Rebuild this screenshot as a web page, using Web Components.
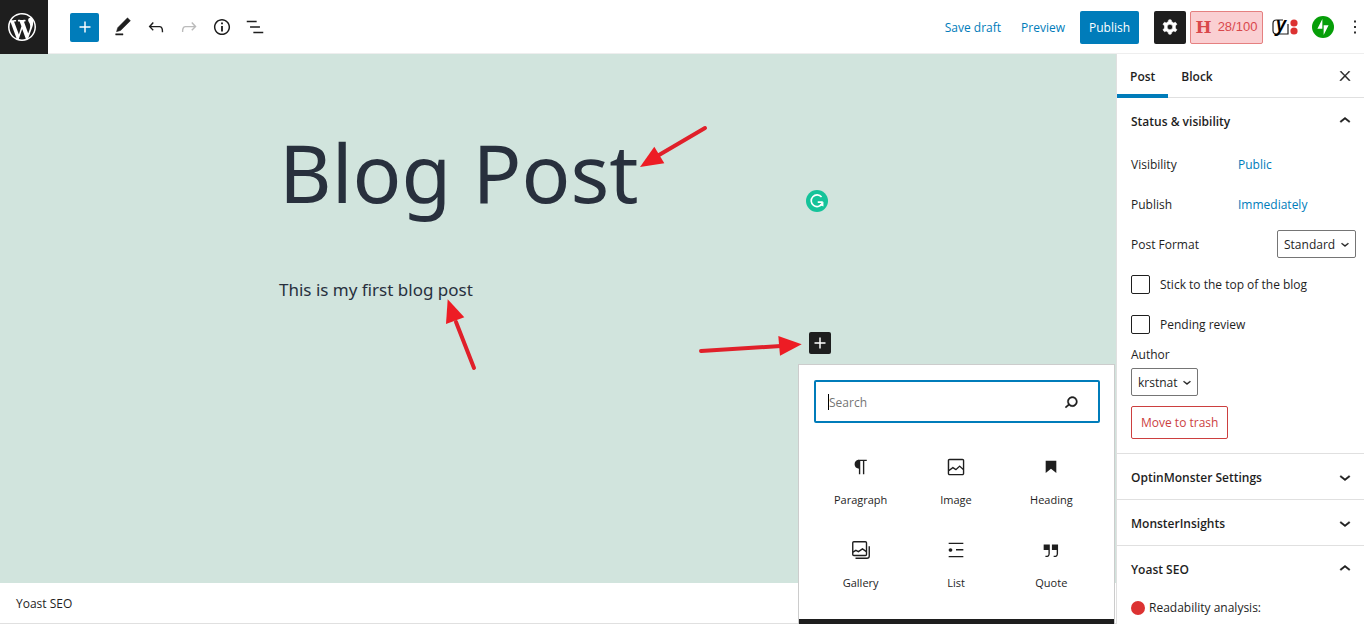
<!DOCTYPE html>
<html lang="en">
<head>
<meta charset="utf-8">
<meta name="viewport" content="width=device-width, initial-scale=1">
<title>Edit Post</title>
<style>
body {
  margin: 0;
  font-family: "Open Sans", "Noto Sans", sans-serif;
  font-size: 12px;
  line-height: 18px;
  color: #1e1e1e;
  --blue: #007cba;
  --dark: #1e1e1e;
  --line: #e0e0e0;
  --red: #cc3f3f;
}
</style>
</head>
<body>
<post-editor></post-editor>

<script>
/**
 * Icon shapes, all on a 24x24 grid unless a viewBox is given.
 */
const icons = {
  plus: '<path d="M18 11.2h-5.2V6h-1.6v5.2H6v1.6h5.2V18h1.6v-5.2H18z"/>',
  edit: '<path stroke="currentColor" stroke-width=".5" d="M20.1 5.1L16.9 2 6.2 12.7l-1.3 4.4 4.5-1.3L20.1 5.1zM4 20.8h8v-1.5H4v1.5z"/>',
  undo: '<path d="M18.3 11.7c-.6-.6-1.4-.9-2.3-.9H6.7l2.9-3.3-1.1-1-4.5 5L8.5 16l1-1-2.7-2.7H16c.5 0 .9.2 1.3.5 1 1 1 3.4 1 4.5v.3h1.5v-.2c0-1.5 0-4.3-1.5-5.7z"/>',
  redo: '<path d="M15.6 6.5l-1.1 1 2.9 3.3H8c-.9 0-1.7.3-2.3.9-1.4 1.5-1.4 4.2-1.4 5.6v.2h1.5v-.3c0-1.1 0-3.5 1-4.5.3-.3.7-.5 1.3-.5h9.2L14.5 15l1.1 1.1 4.6-4.6-4.6-5z"/>',
  info: '<path d="M12 3.2c-4.8 0-8.8 3.9-8.8 8.8 0 4.8 3.9 8.8 8.8 8.8 4.8 0 8.8-3.9 8.8-8.8 0-4.8-4-8.8-8.8-8.8zm0 16c-4 0-7.2-3.3-7.2-7.2C4.8 8 8 4.8 12 4.8s7.2 3.3 7.2 7.2c0 4-3.2 7.2-7.2 7.2zM11 17h2v-6h-2v6zm0-8h2V7h-2v2z"/>',
  outline: '<path d="M13.8 5.2H3v1.5h10.8V5.2zm-3.6 12v1.5H21v-1.5H10.2zm7.2-6H6.6v1.5h10.8v-1.5z"/>',
  cog: '<path fill-rule="evenodd" stroke="currentColor" stroke-width=".6" d="M10.289 4.836A1 1 0 0111.275 4h1.306a1 1 0 01.987.836l.244 1.466c.787.26 1.503.679 2.108 1.218l1.393-.522a1 1 0 011.216.437l.653 1.13a1 1 0 01-.23 1.273l-1.148.944a6.025 6.025 0 010 2.435l1.149.946a1 1 0 01.23 1.272l-.653 1.13a1 1 0 01-1.216.437l-1.394-.522c-.605.54-1.32.958-2.108 1.218l-.244 1.466a1 1 0 01-.987.836h-1.306a1 1 0 01-.986-.836l-.244-1.466a5.995 5.995 0 01-2.108-1.218l-1.394.522a1 1 0 01-1.217-.436l-.653-1.131a1 1 0 01.23-1.272l1.149-.946a6.026 6.026 0 010-2.435l-1.148-.944a1 1 0 01-.23-1.272l.653-1.131a1 1 0 011.217-.437l1.393.522a5.994 5.994 0 012.108-1.218l.244-1.466zM14.929 12a3 3 0 11-6 0 3 3 0 016 0z"/>',
  more: '<path d="M13 19h-2v-2h2v2zm0-6h-2v-2h2v2zm0-6h-2V5h2v2z"/>',
  close: '<path stroke="currentColor" stroke-width=".8" d="M13 11.8l6.1-6.3-1-1-6.1 6.2-6.1-6.2-1 1 6.1 6.3-6.5 6.7 1 1 6.5-6.6 6.5 6.6 1-1z"/>',
  up: '<path stroke="currentColor" stroke-width=".5" d="M6.5 12.4L12 8l5.5 4.4-.9 1.2L12 10l-4.5 3.6-1-1.2z"/>',
  down: '<path stroke="currentColor" stroke-width=".5" d="M17.5 11.6L12 16l-5.5-4.4.9-1.2L12 14l4.5-3.6 1 1.2z"/>',
  search: '<path stroke="currentColor" stroke-width=".4" d="M13.5 6C10.5 6 8 8.5 8 11.5c0 1.1.3 2.1.9 3l-3.4 3 1 1.1 3.4-2.9c1 .9 2.2 1.4 3.6 1.4 3 0 5.5-2.5 5.5-5.5C19 8.5 16.5 6 13.5 6zm0 9.5c-2.2 0-4-1.8-4-4s1.8-4 4-4 4 1.8 4 4-1.8 4-4 4z"/>',
  paragraph: '<path d="M18.3 4H9.9v-.1l-.9.2c-2.3.4-4 2.4-4 4.8s1.7 4.4 4 4.8l.7.1V20h1.5V5.5h2.9V20h1.5V5.5h2.7V4z"/>',
  image: '<path d="M19 3H5c-1.1 0-2 .9-2 2v14c0 1.1.9 2 2 2h14c1.1 0 2-.9 2-2V5c0-1.1-.9-2-2-2zM5 4.5h14c.3 0 .5.2.5.5v8.4l-3-2.9c-.3-.3-.8-.3-1 0L11.9 14 9 12c-.3-.2-.6-.2-.8 0l-3.6 2.6V5c-.1-.3.1-.5.4-.5zm14 15H5c-.3 0-.5-.2-.5-.5v-2.4l4.1-3 3 1.9c.3.2.7.2.9-.1L16 12l3.5 3.4V19c0 .3-.2.5-.5.5z"/>',
  heading: '<path d="M6.2 5.2v13.4l5.8-4.8 5.8 4.8V5.2z"/>',
  gallery: '<g fill="none" stroke="currentColor" stroke-width="1.5"><rect x="3" y="3" width="15" height="15" rx="1.2"/><path d="M3.2 14.4l3.2-2 2.8 1.4 4.4-3 4.3 3M21 8v10.5c0 1.4-1 2.5-2.5 2.5H6"/></g>',
  list: '<path d="M4 4v1.5h16V4H4zm8 8.5h8V11h-8v1.5zM4 20h16v-1.5H4V20zm4-8c0-1.1-.9-2-2-2s-2 .9-2 2 .9 2 2 2 2-.9 2-2z"/>',
  quote: '<path d="M13 6v6h5.2v4c0 .8-.2 1.4-.5 1.7-.6.6-1.6.6-2.5.5h-.3v1.5h.5c1 0 2.3-.1 3.3-1 .6-.6 1-1.6 1-2.8V6H13zm-9 6h5.2v4c0 .8-.2 1.4-.5 1.7-.6.6-1.6.6-2.5.5h-.3v1.5h.5c1 0 2.3-.1 3.3-1 .6-.6 1-1.6 1-2.8V6H4v6z"/>',
  wordpress: {
    viewBox: '0 0 20 20',
    body: '<path d="M20 10c0-5.51-4.49-10-10-10C4.48 0 0 4.49 0 10c0 5.52 4.48 10 10 10 5.51 0 10-4.48 10-10zM7.78 15.37L4.37 6.22c.55-.02 1.17-.08 1.17-.08.5-.06.44-1.13-.06-1.11 0 0-1.45.11-2.37.11-.18 0-.37 0-.58-.01C4.12 2.69 6.87 1.11 10 1.11c2.33 0 4.45.87 6.05 2.34-.68-.11-1.65.39-1.65 1.58 0 .74.45 1.36.9 2.1.35.61.55 1.36.55 2.46 0 1.49-1.4 5-1.4 5l-3.03-8.37c.54-.02.82-.17.82-.17.5-.05.44-1.25-.06-1.22 0 0-1.44.12-2.38.12-.87 0-2.33-.12-2.33-.12-.5-.03-.56 1.2-.06 1.22l.92.08 1.26 3.41zM17.41 10c.24-.64.74-1.87.43-4.25.7 1.29 1.05 2.71 1.05 4.25 0 3.29-1.73 6.24-4.4 7.78.97-2.59 1.94-5.2 2.92-7.78zM6.1 18.09C3.12 16.65 1.11 13.53 1.11 10c0-1.3.23-2.48.72-3.59C3.25 10.3 4.67 14.2 6.1 18.09zm4.03-6.63l2.58 6.98c-.86.29-1.76.45-2.71.45-.79 0-1.57-.11-2.29-.33.81-2.38 1.62-4.74 2.42-7.1z"/>'
  },
  jetpack: '<circle cx="12" cy="12" r="12" fill="#069e08"/><path fill="#fff" d="M11.3 3.2v10.6H5.9zM12.7 20.8V10.2h5.4z"/>',
  yoast: {
    viewBox: '0 0 26 20',
    body: '<path d="M11 3H4.5Q1 3 1 6.5v7Q1 17 4.5 17H16V7" fill="none" stroke="#1e1e1e" stroke-width="1.2"/><text x="4" y="14" font-family="Noto Sans, sans-serif" font-size="20" font-weight="600" font-style="italic" fill="#000">y</text><circle cx="22" cy="6" r="3.6" fill="#dc3232"/><circle cx="22" cy="14" r="3.6" fill="#dc3232"/>'
  },
  grammarly: '<circle cx="12" cy="12" r="12" fill="#15c39a"/><path d="M17 7.6A6.4 6.4 0 1 0 17.6 15M18.3 13.2H12.8" fill="none" stroke="#fff" stroke-width="1.8"/><path d="M19 12.7v5.3l-4.2-2z" fill="#fff"/>'
}

/**
 * Creates a template from markup.
 *
 * @param {string} html - The markup.
 * @returns {HTMLTemplateElement} The template.
 */
const createTemplate = (html) => {
  const template = document.createElement('template')
  template.innerHTML = html
  return template
}

customElements.define('wp-icon',
  /**
   * Draws one icon, sized by the --size property.
   */
  class extends HTMLElement {
    constructor() {
      super()
      this.attachShadow({ mode: 'open' })
    }

    connectedCallback() {
      const icon = icons[this.getAttribute('name')]
      const viewBox = icon.viewBox || '0 0 24 24'
      this.shadowRoot.innerHTML = `
        <style>
          :host { display: inline-flex; flex: none; }
          svg { display: block; height: var(--size, 22px); fill: currentColor; overflow: visible; }
        </style>
        <svg viewBox="${viewBox}" aria-hidden="true">${icon.body || icon}</svg>
      `
    }
  }
)

const headerTemplate = createTemplate(`
  <style>
:host {
  display: flex;
  align-items: center;
  justify-content: space-between;
  height: 54px;
  background: #fff;
  box-shadow: inset 0 -1px #eee;
}

button, a {
  font: inherit;
  color: inherit;
  display: inline-flex;
  align-items: center;
  justify-content: center;
  padding: 0;
  border: none;
  border-radius: 2px;
  background: none;
  text-decoration: none;
  cursor: pointer;
}

.left, .right, .pinned {
  display: flex;
  align-items: center;
}

.logo {
  --size: 28px;
  width: 48px;
  height: 54px;
  padding-right: 5px;
  box-sizing: border-box;
  margin-right: 22px;
  border-radius: 0;
  background: var(--dark);
  color: #fff;
}

.add {
  width: 29px;
  height: 29px;
  margin-right: 7px;
  background: var(--blue);
  color: #fff;
}

.tool {
  width: 33px;
  height: 33px;
}

.tool:disabled {
  color: #bbb;
}

.right {
  gap: 15px;
}

.links {
  display: flex;
  gap: 20px;
  padding-top: 2px;
  color: var(--blue);
}

.publish {
  width: 59px;
  height: 33px;
  padding-top: 2px;
  background: var(--blue);
  color: #fff;
}

.pinned {
  gap: 4px;
}

.settings {
  width: 32px;
  height: 33px;
  background: var(--dark);
  color: #fff;
}

.score {
  width: 73px;
  height: 33px;
  box-sizing: border-box;
  gap: 6px;
  border: 1px solid #e58080;
  background: #facfd2;
  color: #d9484c;
  font-family: "Liberation Sans", sans-serif;
  font-size: 13px;
}

.score b {
  font-family: "DejaVu Serif", serif;
  font-size: 17px;
}

.yoast {
  --size: 20px;
  margin-left: 5px;
}

.jetpack {
  margin-left: 10px;
}

.more {
  width: 18px;
  margin-left: 8px;
}
  </style>
  <div class="left">
    <a class="logo" href="#" aria-label="View posts"><wp-icon name="wordpress"></wp-icon></a>
    <button class="add" aria-label="Add block"><wp-icon name="plus"></wp-icon></button>
    <button class="tool" aria-label="Tools"><wp-icon name="edit"></wp-icon></button>
    <button class="tool" aria-label="Undo"><wp-icon name="undo"></wp-icon></button>
    <button class="tool" aria-label="Redo" disabled><wp-icon name="redo"></wp-icon></button>
    <button class="tool" aria-label="Details"><wp-icon name="info"></wp-icon></button>
    <button class="tool" aria-label="Outline"><wp-icon name="outline"></wp-icon></button>
  </div>
  <div class="right">
    <div class="links">
      <button>Save draft</button>
      <button>Preview</button>
    </div>
    <button class="publish">Publish</button>
    <div class="pinned">
      <button class="settings" aria-label="Settings"><wp-icon name="cog"></wp-icon></button>
      <button class="score"><b>H</b>28/100</button>
      <button class="yoast" aria-label="Yoast SEO"><wp-icon name="yoast"></wp-icon></button>
      <button class="jetpack" aria-label="Jetpack"><wp-icon name="jetpack"></wp-icon></button>
      <button class="more" aria-label="Options"><wp-icon name="more"></wp-icon></button>
    </div>
  </div>
`)

customElements.define('editor-header',
  /**
   * Top toolbar of the editor.
   */
  class extends HTMLElement {
    constructor() {
      super()
      this.attachShadow({ mode: 'open' })
      this.shadowRoot.appendChild(headerTemplate.content.cloneNode(true))
    }
  }
)

const tileTemplate = createTemplate(`
  <style>
:host {
  display: block;
}

button {
  display: flex;
  flex-direction: column;
  align-items: center;
  justify-content: center;
  gap: 13px;
  width: 100%;
  height: 83px;
  padding: 0;
  border: none;
  background: none;
  color: var(--dark);
  font: inherit;
  font-size: 11px;
  cursor: pointer;
}
  </style>
  <button><wp-icon></wp-icon><span><slot></slot></span></button>
`)

customElements.define('block-tile',
  /**
   * One block type in the inserter.
   */
  class extends HTMLElement {
    constructor() {
      super()
      this.attachShadow({ mode: 'open' })
      const content = tileTemplate.content.cloneNode(true)
      content.querySelector('wp-icon').setAttribute('name', this.getAttribute('icon'))
      this.shadowRoot.appendChild(content)
    }
  }
)

const inserterTemplate = createTemplate(`
  <style>
:host {
  display: block;
  width: 315px;
  background: #fff;
  box-shadow: 0 0 0 1px #ccc;
}

.search {
  display: flex;
  align-items: center;
  height: 43px;
  box-sizing: border-box;
  margin: 15px 14px 18px 15px;
  padding: 0 16px 0 12px;
  border: 2px solid var(--blue);
  border-radius: 2px;
}

.caret {
  width: 1px;
  height: 16px;
  background: #000;
}

input {
  flex: 1;
  min-width: 0;
  padding: 2px 0 0;
  border: none;
  outline: none;
  background: none;
  font: inherit;
}

input::placeholder {
  color: #757575;
}

.tiles {
  display: grid;
  grid-template-columns: repeat(3, 1fr);
  padding: 0 15px 12px 14px;
}

.browse {
  display: block;
  width: 100%;
  height: 44px;
  border: none;
  background: var(--dark);
}
  </style>
  <div class="search">
    <span class="caret"></span>
    <input type="text" placeholder="Search" aria-label="Search for a block">
    <wp-icon name="search"></wp-icon>
  </div>
  <div class="tiles"><slot></slot></div>
  <button class="browse" aria-label="Browse all"></button>
`)

customElements.define('block-inserter',
  /**
   * Quick inserter popover.
   */
  class extends HTMLElement {
    constructor() {
      super()
      this.attachShadow({ mode: 'open' })
      this.shadowRoot.appendChild(inserterTemplate.content.cloneNode(true))
    }
  }
)

const canvasTemplate = createTemplate(`
  <style>
:host {
  display: flex;
  flex-direction: column;
  min-width: 0;
  background: #d1e4dd;
  color: #28303d;
}

.content {
  position: relative;
  flex: 1;
  width: 100%;
  max-width: 558px;
  margin: 0 auto;
  padding-top: 68px;
  box-sizing: border-box;
}

.title {
  position: relative;
}

h1, p {
  font-family: "Noto Sans", sans-serif;
}

h1 {
  margin: 0;
  font-size: 81px;
  line-height: 100px;
  font-weight: 400;
}

.grammarly {
  position: absolute;
  right: 9px;
  bottom: 10px;
}

p {
  margin: 53px 0 27px;
  font-size: 17px;
  line-height: 30px;
}

.appender {
  position: relative;
  width: 22px;
  margin-left: auto;
  margin-right: 6px;
}

.appender > button {
  display: flex;
  padding: 0;
  border: none;
  border-radius: 2px;
  background: var(--dark);
  color: #fff;
}

block-inserter {
  position: absolute;
  top: 33px;
  left: -10px;
  z-index: 2;
  color: var(--dark);
}

.arrows {
  position: absolute;
  top: 0;
  left: 0;
  overflow: visible;
  pointer-events: none;
}

.metabox {
  height: 41px;
  box-sizing: border-box;
  padding: 12px 16px 0;
  border-bottom: 1px solid var(--line);
  background: #fff;
  color: var(--dark);
}
  </style>
  <div class="content">
    <div class="title">
      <h1><slot name="title"></slot></h1>
      <wp-icon class="grammarly" name="grammarly"></wp-icon>
    </div>
    <p><slot name="text"></slot></p>
    <div class="appender">
      <button aria-label="Add block"><wp-icon name="plus"></wp-icon></button>
      <block-inserter>
        <block-tile icon="paragraph">Paragraph</block-tile>
        <block-tile icon="image">Image</block-tile>
        <block-tile icon="heading">Heading</block-tile>
        <block-tile icon="gallery">Gallery</block-tile>
        <block-tile icon="list">List</block-tile>
        <block-tile icon="quote">Quote</block-tile>
      </block-inserter>
    </div>
    <svg class="arrows" width="558" height="529" fill="#ed1c24" stroke="#e0202a" stroke-width="4" stroke-linecap="round" aria-hidden="true">
      <path d="M426 74L380 101"/><path stroke="none" d="M361 113L375.3 92.7L385.3 109.3z"/>
      <path d="M195 314L177 268"/><path stroke="none" d="M168.7 245.3L167 270L185.3 263.3z"/>
      <path d="M422 297L502 292"/><path stroke="none" d="M522.7 290.3L499.3 282L501 301.7z"/>
    </svg>
  </div>
  <div class="metabox">Yoast SEO</div>
`)

customElements.define('editor-canvas',
  /**
   * The post being written.
   */
  class extends HTMLElement {
    constructor() {
      super()
      this.attachShadow({ mode: 'open' })
      this.shadowRoot.appendChild(canvasTemplate.content.cloneNode(true))
    }
  }
)

const panelTemplate = createTemplate(`
  <style>
:host {
  display: block;
  border-bottom: 1px solid var(--line);
}

button {
  display: flex;
  align-items: center;
  justify-content: space-between;
  width: 100%;
  height: 45px;
  padding: 0 8px 0 14px;
  border: none;
  background: none;
  color: var(--dark);
  font: inherit;
  font-weight: 600;
  cursor: pointer;
}

button span {
  padding-top: 2px;
}

.body {
  padding: 1px 8px 14px 14px;
}

.body[hidden] {
  display: none;
}
  </style>
  <button><span></span><wp-icon></wp-icon></button>
  <div class="body"><slot></slot></div>
`)

customElements.define('sidebar-panel',
  /**
   * Collapsible panel in the sidebar.
   */
  class extends HTMLElement {
    constructor() {
      super()
      this.attachShadow({ mode: 'open' })
      const content = panelTemplate.content.cloneNode(true)
      const open = this.hasAttribute('open')
      content.querySelector('span').textContent = this.getAttribute('heading')
      content.querySelector('wp-icon').setAttribute('name', open ? 'up' : 'down')
      content.querySelector('button').setAttribute('aria-expanded', open)
      content.querySelector('.body').hidden = !open
      this.shadowRoot.appendChild(content)
    }
  }
)

const sidebarTemplate = createTemplate(`
  <style>
:host {
  display: block;
  overflow: hidden;
  border-left: 1px solid var(--line);
  background: #fff;
}

button {
  border: none;
  background: none;
  padding: 0;
  color: inherit;
  font: inherit;
  cursor: pointer;
}

.tabs {
  display: flex;
  height: 44px;
  box-sizing: border-box;
  padding-right: 8px;
  border-bottom: 1px solid var(--line);
}

.tab {
  padding: 6px 13px 0;
  border-bottom: 4px solid transparent;
  margin-bottom: -1px;
  font-weight: 600;
}

.tab.active {
  border-color: var(--blue);
}

.close {
  --size: 16px;
  display: flex;
  align-items: center;
  justify-content: center;
  width: 22px;
  margin-left: auto;
}

.row {
  display: flex;
  align-items: center;
  height: 40px;
}

.row .name, .row label, .row button {
  padding-top: 2px;
}

.row .name {
  width: 107px;
}

.row button {
  color: var(--blue);
}

.row .select {
  margin-left: auto;
}

.row input {
  appearance: none;
  width: 19px;
  height: 19px;
  margin: 0 10px 0 0;
  border: 1px solid var(--dark);
  border-radius: 2px;
}

.select {
  display: inline-grid;
  align-items: center;
}

.select select, .select wp-icon {
  grid-area: 1 / 1;
}

.select wp-icon {
  --size: 16px;
  justify-self: end;
  margin-right: 3px;
  pointer-events: none;
}

select {
  appearance: none;
  height: 28px;
  padding: 1px 19px 0 6px;
  border: 1px solid #757575;
  border-radius: 2px;
  background: #fff;
  color: var(--dark);
  font: inherit;
}

.author {
  display: flex;
  flex-direction: column;
  align-items: flex-start;
  gap: 4px;
  padding-top: 2px;
}

.trash {
  height: 33px;
  margin-top: 10px;
  padding: 1px 9px 0;
  border: 1px solid var(--red);
  border-radius: 2px;
  color: var(--red);
}

.analysis {
  display: flex;
  align-items: center;
  gap: 4px;
  height: 32px;
}

.dot {
  width: 14px;
  height: 14px;
  border-radius: 50%;
  background: #dc3232;
}
  </style>
  <div class="tabs">
    <button class="tab active">Post</button>
    <button class="tab">Block</button>
    <button class="close" aria-label="Close settings"><wp-icon name="close"></wp-icon></button>
  </div>
  <sidebar-panel heading="Status &amp; visibility" open>
    <div class="row"><span class="name">Visibility</span><button>Public</button></div>
    <div class="row"><span class="name">Publish</span><button>Immediately</button></div>
    <div class="row">
      <label for="format">Post Format</label>
      <span class="select">
        <select id="format"><option>Standard</option></select>
        <wp-icon name="down"></wp-icon>
      </span>
    </div>
    <div class="row"><input type="checkbox" id="sticky"><label for="sticky">Stick to the top of the blog</label></div>
    <div class="row"><input type="checkbox" id="pending"><label for="pending">Pending review</label></div>
    <div class="author">
      <label for="author">Author</label>
      <span class="select">
        <select id="author"><option>krstnat</option></select>
        <wp-icon name="down"></wp-icon>
      </span>
    </div>
    <button class="trash">Move to trash</button>
  </sidebar-panel>
  <sidebar-panel heading="OptinMonster Settings"></sidebar-panel>
  <sidebar-panel heading="MonsterInsights"></sidebar-panel>
  <sidebar-panel heading="Yoast SEO" open>
    <div class="analysis"><span class="dot"></span>Readability analysis:</div>
  </sidebar-panel>
`)

customElements.define('editor-sidebar',
  /**
   * Settings sidebar.
   */
  class extends HTMLElement {
    constructor() {
      super()
      this.attachShadow({ mode: 'open' })
      this.shadowRoot.appendChild(sidebarTemplate.content.cloneNode(true))
    }
  }
)

const editorTemplate = createTemplate(`
  <style>
:host {
  display: grid;
  grid-template-columns: minmax(0, 1fr) 248px;
  grid-template-rows: auto minmax(0, 1fr);
  height: 100vh;
  overflow: hidden;
}

editor-header {
  grid-column: 1 / -1;
}
  </style>
  <editor-header></editor-header>
  <editor-canvas>
    <span slot="title">Blog Post</span>
    <span slot="text">This is my first blog post</span>
  </editor-canvas>
  <editor-sidebar></editor-sidebar>
`)

customElements.define('post-editor',
  /**
   * The whole editor screen.
   */
  class extends HTMLElement {
    constructor() {
      super()
      this.attachShadow({ mode: 'open' })
      this.shadowRoot.appendChild(editorTemplate.content.cloneNode(true))
    }
  }
)
</script>
</body>
</html>
